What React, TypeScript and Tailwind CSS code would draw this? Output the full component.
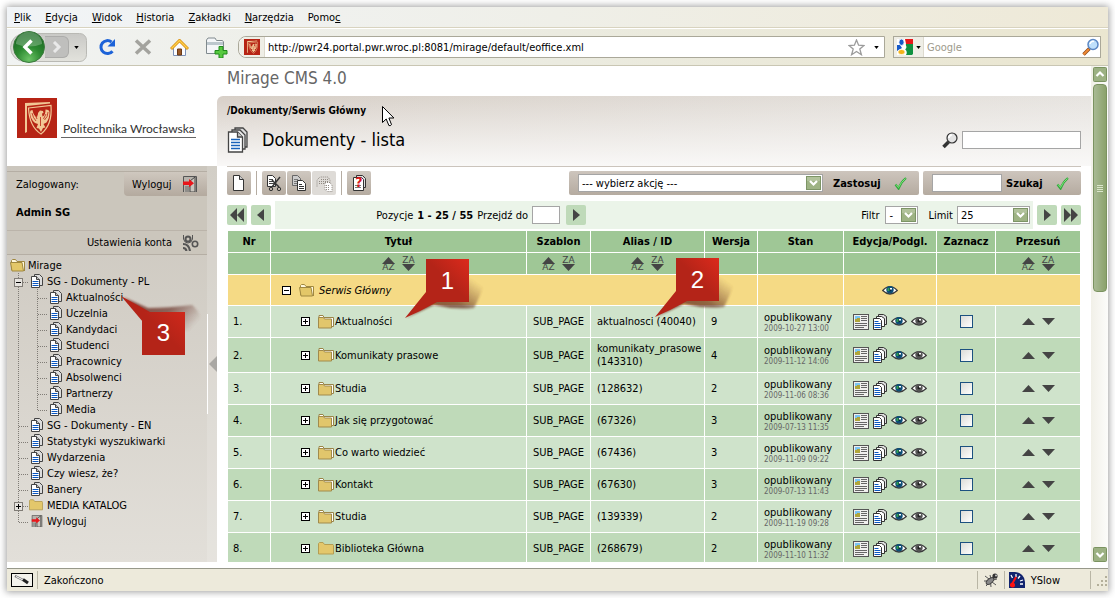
import React, { useState } from 'react';

type DocRow = { nr: number; title: string; alias: string; version: number; date: string; plain?: boolean };

const ROWS: DocRow[] = [
  { nr: 1, title: 'Aktualności', alias: 'aktualnosci (40040)', version: 9, date: '2009-10-27 13:00' },
  { nr: 2, title: 'Komunikaty prasowe', alias: 'komunikaty_prasowe (143310)', version: 4, date: '2009-11-12 14:06' },
  { nr: 3, title: 'Studia', alias: '(128632)', version: 2, date: '2009-11-06 08:36' },
  { nr: 4, title: 'Jak się przygotować', alias: '(67326)', version: 3, date: '2009-07-13 11:35' },
  { nr: 5, title: 'Co warto wiedzieć', alias: '(67436)', version: 3, date: '2009-11-09 09:22' },
  { nr: 6, title: 'Kontakt', alias: '(67630)', version: 3, date: '2009-07-13 11:43' },
  { nr: 7, title: 'Studia', alias: '(139339)', version: 2, date: '2009-11-19 09:28' },
  { nr: 8, title: 'Biblioteka Główna', alias: '(268679)', version: 2, date: '2009-11-10 11:32', plain: true },
];

type GuideKind = 'tee' | 'end' | 'line' | 'plus' | 'minus';
type TreeItem = { label: string; guides: GuideKind[]; icon: 'doc' | 'open' | 'folder' | 'exit' };

const TREE: TreeItem[] = [
  { label: 'Mirage', guides: [], icon: 'open' },
  { label: 'SG - Dokumenty - PL', guides: ['minus'], icon: 'doc' },
  { label: 'Aktualności', guides: ['line', 'tee'], icon: 'doc' },
  { label: 'Uczelnia', guides: ['line', 'tee'], icon: 'doc' },
  { label: 'Kandydaci', guides: ['line', 'tee'], icon: 'doc' },
  { label: 'Studenci', guides: ['line', 'tee'], icon: 'doc' },
  { label: 'Pracownicy', guides: ['line', 'tee'], icon: 'doc' },
  { label: 'Absolwenci', guides: ['line', 'tee'], icon: 'doc' },
  { label: 'Partnerzy', guides: ['line', 'tee'], icon: 'doc' },
  { label: 'Media', guides: ['line', 'end'], icon: 'doc' },
  { label: 'SG - Dokumenty - EN', guides: ['tee'], icon: 'doc' },
  { label: 'Statystyki wyszukiwarki', guides: ['tee'], icon: 'doc' },
  { label: 'Wydarzenia', guides: ['tee'], icon: 'doc' },
  { label: 'Czy wiesz, że?', guides: ['tee'], icon: 'doc' },
  { label: 'Banery', guides: ['tee'], icon: 'doc' },
  { label: 'MEDIA KATALOG', guides: ['plus'], icon: 'folder' },
  { label: 'Wyloguj', guides: ['end'], icon: 'exit' },
];

const App: React.FC = () => {
  const [checked, setChecked] = useState<number[]>([]);

  const toggle = (nr: number) =>
    setChecked(prev => (prev.includes(nr) ? prev.filter(n => n !== nr) : [...prev, nr]));

  return (
    <div className="relative h-screen overflow-hidden bg-white p-[7px] font-['DejaVu_Sans_Condensed','DejaVu_Sans',sans-serif] text-[11px] leading-[13px] text-black">
      <div className="flex h-full flex-col bg-white shadow-[0_0_7px_1px_rgba(0,0,0,0.38)]">
        <MenuBar />
        <BrowserToolbar />

        <div className="mb-[6px] flex min-h-0 flex-1">
          <Sidebar />
          <main className="flex min-w-0 flex-1 flex-col overflow-hidden">
            <div className="h-[30px] shrink-0 pl-[10px] text-[17px] leading-[24px] text-[#666]">Mirage CMS 4.0</div>
            <PageHeader />
            <div className="mr-[10px] ml-[10px] flex min-h-0 flex-1 flex-col overflow-hidden border-t border-[#cbc4bc]">
              <ActionBar />
              <Pager />
              <div className="shrink-0 pl-px">
                <table className="w-full table-fixed border-separate border-spacing-0">
                  <colgroup>
                    <col className="w-[43px]" />
                    <col />
                    <col className="w-[64px]" />
                    <col className="w-[114px]" />
                    <col className="w-[53px]" />
                    <col className="w-[86px]" />
                    <col className="w-[93px]" />
                    <col className="w-[59px]" />
                    <col className="w-[85px]" />
                  </colgroup>
                  <thead className="bg-[#9fc796]">
                    <tr className="h-[22px]">
                      {['Nr', 'Tytuł', 'Szablon', 'Alias / ID', 'Wersja', 'Stan', 'Edycja/Podgl.', 'Zaznacz', 'Przesuń'].map(h => (
                        <th key={h} scope="col" className="border-r border-b border-white p-0 text-center font-bold whitespace-nowrap">{h}</th>
                      ))}
                    </tr>
                    <tr className="h-[22px]">
                      {[false, true, true, true, false, false, false, false, true].map((sortable, i) => (
                        <td key={i} className="border-r border-b border-white p-0">
                          {sortable && <SortButtons />}
                        </td>
                      ))}
                    </tr>
                  </thead>
                  <tbody>
                    <tr className="h-[31px] bg-[#f5da85]">
                      <td className="border-r border-b border-white" />
                      <td colSpan={4} className="border-r border-b border-white p-0 pl-[11px]">
                        <div className="flex items-center">
                          <ExpandBox open />
                          <span className="ml-2"><FolderOpen /></span>
                          <a href="#serwis" className="ml-1 italic">Serwis Główny</a>
                        </div>
                      </td>
                      <td className="border-r border-b border-white" />
                      <td className="border-r border-b border-white p-0">
                        <button aria-label="Podgląd" className="mx-auto block"><Eye color /></button>
                      </td>
                      <td colSpan={2} className="border-r border-b border-white" />
                    </tr>
                    {ROWS.map(row => (
                      <tr key={row.nr} className={`h-8 ${row.nr % 2 ? 'bg-[#cfe3cb]' : 'bg-[#bfdab9]'}`}>
                        <td className="border-r border-b border-white p-0 pl-[5px]">{row.nr}.</td>
                        <td className="border-r border-b border-white p-0 pl-[30px]">
                          <div className="flex items-center">
                            <ExpandBox />
                            <span className="ml-2">{row.plain ? <Folder /> : <FolderPages />}</span>
                            <a href={`#doc-${row.nr}`} className="ml-px whitespace-nowrap">{row.title}</a>
                          </div>
                        </td>
                        <td className="border-r border-b border-white p-0 pl-[6px]">SUB_PAGE</td>
                        <td className="border-r border-b border-white py-1 pr-0 pl-[6px]">{row.alias}</td>
                        <td className="border-r border-b border-white p-0 pl-[6px]">{row.version}</td>
                        <td className="border-r border-b border-white p-0 pl-[6px]">
                          <div>opublikowany</div>
                          <div className="text-[8px] leading-[9px] text-[#666]">{row.date}</div>
                        </td>
                        <td className="border-r border-b border-white p-0">
                          <div className="flex items-center justify-center gap-1">
                            <button aria-label="Edytuj"><ArticleIcon /></button>
                            <button aria-label="Wersje"><PagesIcon /></button>
                            <button aria-label="Podgląd"><Eye color /></button>
                            <button aria-label="Podgląd roboczy"><Eye /></button>
                          </div>
                        </td>
                        <td className="border-r border-b border-white p-0">
                          <input
                            type="checkbox"
                            aria-label={`Zaznacz ${row.title}`}
                            checked={checked.includes(row.nr)}
                            onChange={() => toggle(row.nr)}
                            className="mx-auto block size-[13px] appearance-none border border-[#1c5180] bg-linear-to-br from-[#dcdcd7] to-white checked:bg-[#1c5180]"
                          />
                        </td>
                        <td className="border-r border-b border-white p-0">
                          <div className="flex items-center justify-center gap-[7px]">
                            <button aria-label="W górę"><Triangle up /></button>
                            <button aria-label="W dół"><Triangle /></button>
                          </div>
                        </td>
                      </tr>
                    ))}
                  </tbody>
                </table>
              </div>
            </div>
          </main>
          <ScrollBar />
        </div>

        <StatusBar />
      </div>

      {/* Numbered callouts lying over the page */}
      <Callout n={1} className="top-[259px] left-[405px]" />
      <Callout n={2} className="top-[258px] left-[655px]" />
      <CalloutUp n={3} className="top-[296px] left-[121px]" />
      <svg className="pointer-events-none absolute top-[106px] left-[382px]" width="13" height="21" viewBox="0 0 13 21">
        <path d="M.5.5v16l3.700-3.500 2.700 6.500q1.200.8 2.600-.9L6.900 12h5z" fill="#fff" stroke="#000" />
      </svg>
    </div>
  );
};

const MenuBar = () => (
  <nav className="flex h-[21px] shrink-0 items-center gap-[14px] border-b border-[#d8d3bf] bg-linear-to-r from-[#f1f4f7] via-[#efefe8] to-[#eee9d7] pl-[7px]">
    {[['', 'P', 'lik'], ['', 'E', 'dycja'], ['', 'W', 'idok'], ['', 'H', 'istoria'], ['', 'Z', 'akładki'], ['', 'N', 'arzędzia'], ['Pomo', 'c', '']].map(([a, key, b]) => (
      <button key={key}>{a}<u className="underline-offset-1">{key}</u>{b}</button>
    ))}
  </nav>
);

const BrowserToolbar = () => (
  <div className="flex h-[38px] shrink-0 items-center border-t border-b border-t-white border-b-[#c9c6b3] bg-linear-to-r from-[#f1f3f2] via-[#ebebe0] to-[#eae6d0] pr-[7px] pl-[3px]">
    <div className="flex h-[29px] w-[77px] shrink-0 items-center rounded-l-2xl rounded-r-lg border border-[#b9b9b4] bg-linear-to-b from-[#c9c9c6] to-[#e2e2dc] pl-[2px]">
      <button aria-label="Wstecz" className="shrink-0">
        <svg width="32" height="32" viewBox="0 0 32 32">
          <defs>
            <radialGradient id="back" cx=".5" cy=".9" r=".8">
              <stop offset="0" stopColor="#6cc366" /><stop offset=".5" stopColor="#2d8a31" /><stop offset="1" stopColor="#1a6a22" />
            </radialGradient>
          </defs>
          <circle cx="16" cy="16" r="15.500" fill="url(#back)" stroke="#3c7a3e" />
          <path d="M3 13a13 12 0 0 1 26 0q-13 5-26 0z" fill="#fff" opacity=".25" />
          <path d="M18.500 9.500L12 16l6.500 6.500" fill="none" stroke="#fff" strokeWidth="3.500" />
        </svg>
      </button>
      <button aria-label="Dalej" className="flex h-[22px] w-6 items-center justify-center rounded-r-md border border-l-0 border-[#acacaa] bg-[#bfbfbd]">
        <svg width="10" height="12" viewBox="0 0 10 12"><path d="M2 1l5 5-5 5" fill="none" stroke="#e9e9e9" strokeWidth="3" /></svg>
      </button>
      <button aria-label="Historia kart" className="ml-[5px]"><Caret /></button>
    </div>
    <button aria-label="Odśwież" className="ml-[11px]">
      <svg width="20" height="18" viewBox="0 0 20 18">
        <path d="M14.500 13.200A6.500 6.500 0 1 1 13.500 4" fill="none" stroke="#1d63d8" strokeWidth="3" />
        <path d="M17 1v7.500H9.500z" fill="#1d63d8" />
      </svg>
    </button>
    <button aria-label="Zatrzymaj" className="ml-4">
      <svg width="18" height="18" viewBox="0 0 18 18"><path d="M2 2.500l14 13M16 2.500l-14 13" stroke="#a3a39e" strokeWidth="3.500" /></svg>
    </button>
    <button aria-label="Strona startowa" className="ml-[18px]">
      <svg width="19" height="17" viewBox="0 0 19 17">
        <path d="M3.500 8v8.500h12V8l-6-5.500z" fill="#fbfcff" stroke="#7c92b9" />
        <path d="M1 10l8.500-8.500L18 10" fill="none" stroke="#d99114" strokeWidth="3" />
        <path d="M1.500 9.500l8-8 8 8" fill="none" stroke="#ffcf4a" strokeWidth="1.400" />
        <path d="M7.500 10h4v6h-4z" fill="#9a5a28" stroke="#6b3b17" />
      </svg>
    </button>
    <button aria-label="Nowa karta" className="ml-4">
      <svg width="23" height="21" viewBox="0 0 23 21">
        <path d="M1.500 16.500V3l1.500-2h7l1.500 2.500h6l1 1.500v11.500z" fill="#f4f6f8" stroke="#808a8e" />
        <path d="M2 5h16v3H2z" fill="#bcc7cd" />
        <path d="M14 9.500h4v4h4v3.500h-4v4h-4v-4h-4v-3.500h4z" fill="#57c93f" stroke="#1f8a1b" />
      </svg>
    </button>

    <div className="ml-[10px] flex h-[22px] min-w-0 flex-1 items-center rounded-l-lg border border-[#aaa899] bg-white">
      <span className="flex h-full w-[26px] shrink-0 items-center justify-center rounded-l-lg border-r border-[#dddace] bg-[#efeee6]"><Crest size={16} /></span>
      <input aria-label="Adres" defaultValue="http://pwr24.portal.pwr.wroc.pl:8081/mirage/default/eoffice.xml" className="min-w-0 flex-1 bg-transparent pl-[3px] outline-none" />
      <button aria-label="Dodaj zakładkę">
        <svg width="17" height="17" viewBox="0 0 17 17"><path d="M8.500 1l2.100 5.200 5.400.3-4.200 3.500 1.600 5.700-4.900-3.200-4.900 3.200 1.600-5.700L1 6.500l5.400-.3z" fill="#fff" stroke="#9b9b9b" strokeWidth="1.300" /></svg>
      </button>
      <button aria-label="Pokaż historię" className="mr-[5px] ml-[9px]"><Caret /></button>
    </div>

    <div className="ml-2 flex h-[22px] w-[208px] shrink-0 items-center border border-[#aaa899] bg-white">
      <button aria-label="Wyszukiwarka" className="flex h-full items-center gap-[3px] border-r border-[#dddace] bg-[#efeee6] pr-[2px] pl-[3px]">
        <svg width="16" height="16" viewBox="0 0 16 16">
          <rect width="16" height="16" fill="#fff" />
          <path d="M8 0h8v5H9z" fill="#e8181a" />
          <path d="M9 5h7v10l-1 1H9q2-3-1-6z" fill="#0f9140" />
          <path d="M0 6h3l2 3-5 3z" fill="#1559c8" />
          <ellipse cx="4.500" cy="3.200" rx="2.600" ry="3.200" fill="#1559c8" stroke="#fff" strokeWidth=".8" />
          <ellipse cx="4.500" cy="13" rx="3.600" ry="2.600" fill="#f4b31a" stroke="#fff" strokeWidth=".8" />
          <path d="M7 6q3 2 0 4" fill="none" stroke="#fff" strokeWidth="2" />
        </svg>
        <Caret />
      </button>
      <input aria-label="Szukaj w sieci" placeholder="Google" className="min-w-0 flex-1 pl-[3px] outline-none placeholder:text-[#9d9a8c]" />
      <button aria-label="Szukaj">
        <svg width="18" height="18" viewBox="0 0 18 18">
          <path d="M7.500 10.500L1.500 16.500" stroke="#8a4a1d" strokeWidth="3.400" />
          <path d="M7 11L1.500 16.500" stroke="#f08a34" strokeWidth="2" />
          <circle cx="11" cy="6.500" r="5" fill="#bfe0fb" stroke="#5b87c4" strokeWidth="1.500" />
          <path d="M8 6a3 3 0 0 1 4-2.500" stroke="#fff" strokeWidth="1.500" fill="none" />
        </svg>
      </button>
    </div>
  </div>
);

const Sidebar = () => (
  <aside className="flex w-[210px] shrink-0 flex-col">
    <div className="flex h-[100px] shrink-0 items-end pb-7 pl-[10px]">
      <Crest size={40} />
      <span className="ml-1 border-b border-[#666] pr-px pl-[2px] font-['Lato',sans-serif] text-[12px] leading-[16px] whitespace-nowrap text-[#333]">Politechnika Wrocławska</span>
    </div>
    <div className="flex min-h-0 flex-1 bg-linear-to-b from-[#cbc6bd] to-[#e2dfd9]">
      <div className="min-w-0 flex-1 pt-[5px]">
        <section className="border-y border-[#b5aea4] bg-[#cbc6bc]">
          <div className="flex items-center justify-between pl-[9px]">
            <span>Zalogowany:</span>
            <button className="flex h-6 w-[83px] items-center justify-between rounded-bl-sm bg-linear-to-b from-[#cfc8bf] to-[#b4aa9f] pr-[9px] pl-2">
              Wyloguj <ExitIcon size={16} />
            </button>
          </div>
          <div className="h-[34px] pt-[10px] pl-[9px] font-bold">Admin SG</div>
          <button className="flex h-6 w-full items-center justify-end gap-[10px] border-t border-[#bbb4aa] pr-2">
            Ustawienia konta
            <svg width="17" height="16" viewBox="0 0 17 16" fill="none" stroke="#555">
              <circle cx="6" cy="4" r="2.500" strokeWidth="2" />
              <path d="M1.500 0v4q1 4 4.500 4t4.500-4V0" />
              <circle cx="13" cy="9" r="2.700" strokeWidth="1.600" />
              <path d="M1 9q6 0 7 7M1 13q3 0 3.500 3" strokeWidth="2.200" />
            </svg>
          </button>
        </section>
        <ul className="pt-[2px]">
          {TREE.map(item => (
            <li key={item.label + item.guides.length} className={`flex h-4 items-center ${item.guides.length ? 'pl-[5px]' : 'pl-[3px]'}`}>
              {item.guides.map((g, i) => <Guide key={i} kind={g} />)}
              {item.icon === 'doc' && <DocIcon />}
              {item.icon === 'open' && <FolderOpen />}
              {item.icon === 'folder' && <span className="-ml-0.5"><Folder small /></span>}
              {item.icon === 'exit' && <ExitIcon size={12} />}
              <a href={`#${item.label}`} className={`whitespace-nowrap ${item.guides.length ? 'ml-1' : 'ml-0.5'}`}>{item.label}</a>
            </li>
          ))}
        </ul>
      </div>
      <div className="w-[10px] bg-white/15 pt-[148px]">
        <button aria-label="Zwiń panel" className="flex h-[100px] w-full items-center justify-end border-l border-white">
          <svg width="8" height="16" viewBox="0 0 8 16"><path d="M8 0v16L0 8z" fill="#aaa8a4" /></svg>
        </button>
      </div>
    </div>
  </aside>
);

const PageHeader = () => (
  <header className="h-[70px] shrink-0 rounded-tl-md bg-[linear-gradient(to_bottom,rgba(250,249,248,0),#f9f8f7),linear-gradient(to_right,#d7cfc7,#e7e4e0)] pt-2 pr-[10px] pl-[10px]">
    <div className="text-[10px] font-bold">/Dokumenty/Serwis Główny</div>
    <div className="mt-[10px] flex items-center">
      <svg width="22" height="26" viewBox="0 0 22 26" strokeWidth="1.300" stroke="#444">
        <path d="M8 1h8l4 4v15H8z" fill="#ddd" />
        <path d="M5 3h8l5 5v14H5z" fill="#eee" />
        <path d="M1.500 5h9l5 5v15h-14z" fill="#fff" />
        <path d="M10.500 5v5h5" fill="#ccc" />
        <path d="M4 12.500h9M4 15.500h9M4 18.500h9M4 21.500h9" stroke="#1a63ba" strokeWidth="1.500" />
      </svg>
      <h1 className="ml-[13px] text-[18px] leading-[22px]">Dokumenty - lista</h1>
      <label className="ml-auto flex items-center gap-1">
        <svg width="16" height="17" viewBox="0 0 16 17">
          <path d="M6.500 10L1.500 15" stroke="#333" strokeWidth="3.600" />
          <circle cx="10" cy="6" r="5" fill="#e3e3e3" stroke="#333" strokeWidth="1.200" />
          <path d="M6.800 6a3.200 3.200 0 0 1 3-3" stroke="#fff" strokeWidth="1.800" fill="none" />
        </svg>
        <input aria-label="Szukaj dokumentu" className="h-[18px] w-[119px] border border-[#a5a5a5] bg-white px-1 outline-none" />
      </label>
    </div>
  </header>
);

const ActionBar = () => (
  <div className="flex h-[34px] shrink-0 items-center pb-0.5">
    <ToolButton label="Nowy">
      <path d="M2.500.5h6l4 4v11h-10z" fill="#fff" stroke="#333" /><path d="M8.500.5v4h4" fill="#ccc" stroke="#333" />
    </ToolButton>
    <span className="mx-[5px] h-6 w-px bg-[#b5aca2]" />
    <div className="flex gap-px">
      <ToolButton label="Wytnij">
        <path d="M1.500.5h5l3 3v8h-8z" fill="#fff" stroke="#333" />
        <path d="M3 4.500h4M3 6.500h5M3 8.500h5" stroke="#444" />
        <path d="M14 2L6 12M6 5l7 7" stroke="#333" strokeWidth="1.500" />
        <circle cx="5" cy="14" r="1.700" fill="none" stroke="#333" /><circle cx="13" cy="14" r="1.700" fill="none" stroke="#333" />
      </ToolButton>
      <ToolButton label="Kopiuj">
        <path d="M1.500.5h5l3 3v7h-8z" fill="#ccc" stroke="#666" /><path d="M3 4.500h4M3 6.500h5M3 8.500h5" stroke="#777" />
        <path d="M6.500 5.500h5l3 3v7h-8z" fill="#fff" stroke="#333" /><path d="M8 9.500h3M8 11.500h5M8 13.500h5" stroke="#333" />
      </ToolButton>
      <button aria-label="Wklej" disabled className="flex size-6 items-center justify-center rounded-xs bg-[#dedbd7]">
        <svg width="17" height="17" viewBox="0 0 17 17" fill="none" stroke="#8f8982" strokeDasharray="1 1">
          <path d="M1 11.500V5l3-3h8l2 3v4M3 6.500h9M3 8.500h5M5 4.500h7" />
          <path d="M9 7.500h5l2 3v6h-5l-2-2z" fill="#fff" /><path d="M10 10.500h4M10 12.500h4M10 14.500h4" />
        </svg>
      </button>
    </div>
    <span className="mx-[5px] h-6 w-px bg-[#b5aca2]" />
    <button aria-label="Pomoc" className="relative flex size-6 items-center justify-center rounded-xs bg-linear-to-b from-[#cfc8c0] to-[#b5aba0]">
      <svg width="14" height="16" viewBox="0 0 14 16" stroke="#333">
        <path d="M4.500.5h6l3 3v9h-9z" fill="#ddd" /><path d="M1.500 2.500h8l2 2v11h-10z" fill="#fff" /><path d="M3 12.500h6M3 10.500h6" stroke="#777" />
      </svg>
      <span className="absolute inset-0 text-center text-[14px] leading-[22px] font-bold text-[#d8141a]">?</span>
    </button>

    <div className="ml-auto flex h-6 w-[350px] items-center rounded-xs bg-linear-to-b from-[#cdc5bd] to-[#b5aba0] pl-[9px]">
      <Dropdown label="Akcja" className="w-[245px]" options={['--- wybierz akcję ---']} />
      <button className="ml-[10px] flex flex-1 items-center justify-between pr-3 font-bold">Zastosuj <Tick /></button>
    </div>
    <div className="ml-1 flex h-6 w-[158px] items-center rounded-xs bg-linear-to-b from-[#cdc5bd] to-[#b5aba0] pl-[9px]">
      <input aria-label="Szukana fraza" className="h-[18px] w-[70px] border border-[#a5a5a5] bg-white px-1 outline-none" />
      <button className="ml-1 flex flex-1 items-center justify-between pr-3 font-bold">Szukaj <Tick /></button>
    </div>
  </div>
);

const Pager = () => (
  <div className="mb-0.5 flex h-7 shrink-0 items-center gap-1">
    <PagerButton label="Pierwsza strona"><path d="M8 0v14L1 7zM15 0v14L8 7z" /></PagerButton>
    <PagerButton label="Poprzednia strona"><path d="M11 1v12L4 7z" /></PagerButton>
    <div className="flex h-full flex-1 items-center bg-[#ebf4e9]">
      <form className="flex flex-[414] items-center justify-center" onSubmit={e => e.preventDefault()}>
        <span>Pozycje</span>
        <b className="mx-1 font-bold">1 - 25 / 55</b>
        <label htmlFor="goto">Przejdź do</label>
        <input id="goto" className="ml-1 h-[18px] w-7 border border-[#a5a5a5] bg-white px-1 outline-none" />
        <span className="ml-[6px]"><PagerButton label="Przejdź"><path d="M5 1v12l7-6z" /></PagerButton></span>
      </form>
      <div className="flex flex-[344] items-center justify-end pr-[3px]">
        <span className="mr-[6px]">Filtr</span>
        <Dropdown label="Filtr" className="w-[33px]" options={['-']} />
        <span className="mr-1 ml-[10px]">Limit</span>
        <Dropdown label="Limit" className="w-[73px]" options={['25', '50', '100']} />
      </div>
    </div>
    <PagerButton label="Następna strona"><path d="M5 1v12l7-6z" /></PagerButton>
    <PagerButton label="Ostatnia strona"><path d="M1 0v14l7-7zM8 0v14l7-7z" /></PagerButton>
  </div>
);

const PagerButton = ({ label, children }: { label: string; children: React.ReactNode }) => (
  <button type="button" aria-label={label} className="flex size-5 items-center justify-center rounded-xs bg-[#bfdab9]">
    <svg width="16" height="14" viewBox="0 0 16 14" fill="#444">{children}</svg>
  </button>
);

const ToolButton = ({ label, children }: { label: string; children: React.ReactNode }) => (
  <button aria-label={label} className="flex size-6 items-center justify-center rounded-xs bg-linear-to-b from-[#cfc8c0] to-[#b5aba0]">
    <svg width="16" height="16" viewBox="0 0 16 16">{children}</svg>
  </button>
);

const Dropdown = ({ label, className, options }: { label: string; className: string; options: string[] }) => (
  <span className={`relative block ${className}`}>
    <select aria-label={label} className="block h-[18px] w-full appearance-none border border-[#a5a5a5] bg-white pl-[3px] outline-none">
      {options.map(o => <option key={o}>{o}</option>)}
    </select>
    <svg className="pointer-events-none absolute top-0.5 right-0.5" width="15" height="14" viewBox="0 0 15 14">
      <rect x=".5" y=".5" width="14" height="13" fill="#9eb384" stroke="#7d9566" />
      <path d="M1 1h13v4H1z" fill="#b9c9a5" opacity=".7" />
      <path d="M4 5l3.500 3.500L11 5" fill="none" stroke="#fff" strokeWidth="2.200" />
    </svg>
  </span>
);

const SortButtons = () => (
  <div className="flex justify-center gap-[6px] font-['DejaVu_Sans',sans-serif] text-[9px] leading-[7px] text-[#444]">
    <button aria-label="Sortuj rosnąco" className="flex w-[14px] flex-col items-center">
      <Triangle up />
      <span>AZ</span>
    </button>
    <button aria-label="Sortuj malejąco" className="flex w-[14px] flex-col items-center">
      <span>ZA</span>
      <Triangle />
    </button>
  </div>
);

const ScrollBar = () => (
  <div className="flex w-[17px] shrink-0 flex-col items-center bg-linear-to-r from-[#f1f0e8] to-[#fcfcfa] pt-px">
    <button aria-label="Przewiń w górę"><ScrollArrow up /></button>
    <div className="mt-0.5 flex h-[208px] w-[14px] flex-col items-center justify-center gap-px rounded-sm border border-[#7b9360] bg-linear-to-r from-[#a9ba94] to-[#8ba26c]">
      {[0, 1, 2, 3].map(i => <span key={i} className="h-px w-[6px] bg-[#dbe6cb]" />)}
    </div>
    <button aria-label="Przewiń w dół" className="mt-auto"><ScrollArrow /></button>
  </div>
);

const ScrollArrow = ({ up }: { up?: boolean }) => (
  <svg className="block" width="14" height="15" viewBox="0 0 14 15">
    <rect x=".5" y=".5" width="13" height="14" rx="1" fill="#9cb183" stroke="#7b9360" />
    <path d={up ? 'M3.500 9L7 5.500 10.500 9' : 'M3.500 6L7 9.500 10.500 6'} fill="none" stroke="#fff" strokeWidth="2.200" />
  </svg>
);

const StatusBar = () => (
  <footer className="flex h-[23px] shrink-0 items-center border-t border-[#97988a] bg-[#edeadb] pl-1">
    <button aria-label="Stylish" className="flex h-[14px] w-[22px] items-center justify-center border border-black bg-[#f4f3ec]">
      <svg width="18" height="10" viewBox="0 0 18 10">
        <path d="M2 1l9 4.500" stroke="#777" strokeWidth="2.400" /><path d="M3 1.500l7 3.500" stroke="#fff" />
        <path d="M10 4.500l5 3.500" stroke="#222" strokeWidth="3" />
      </svg>
    </button>
    <span className="ml-1 h-[18px] w-px bg-[#b9b6a5]" />
    <span className="ml-[6px]">Zakończono</span>
    <span className="ml-auto h-[18px] w-px bg-[#b9b6a5]" />
    <svg className="mx-[5px]" width="16" height="16" viewBox="0 0 16 16">
      <path d="M2 4l4 3M1 9h5M3 14l4-4M7 3l1 4M14 7l-4 1M13 13l-4-3M8 15l-.5-5" stroke="#555" />
      <ellipse cx="7" cy="9" rx="4.500" ry="2.300" transform="rotate(-40 7 9)" fill="#888" stroke="#444" />
      <circle cx="12" cy="4" r="2.600" fill="#333" /><circle cx="13" cy="3.500" r="1" fill="#ccc" />
    </svg>
    <span className="h-[18px] w-px bg-[#b9b6a5]" />
    <button className="flex items-center gap-[6px] pl-1">
      <svg width="16" height="16" viewBox="0 0 16 16">
        <path d="M0 0h6a10 10 0 0 1 10 10v6H0z" fill="#12246e" />
        <path d="M2 3l1.500 3M7 2v3M11 4L9 6.500M14 8l-3 1M14 12h-3" stroke="#fff" strokeWidth="1.300" />
        <path d="M2 14L7 5" stroke="#f11" strokeWidth="2" /><circle cx="3.500" cy="13" r="2.500" fill="#f11" />
      </svg>
      YSlow
    </button>
    <span className="ml-[30px] h-[18px] w-px bg-[#b9b6a5]" />
    <svg className="mt-1 ml-[6px]" width="11" height="12" viewBox="0 0 11 12" fill="#b3af9a">
      <path d="M8 0h2v2H8zM4 4h2v2H4zM8 4h2v2H8zM0 8h2v2H0zM4 8h2v2H4zM8 8h2v2H8z" />
    </svg>
  </footer>
);

const Callout = ({ n, className }: { n: number; className: string }) => (
  <div className={`pointer-events-none absolute ${className}`}>
    <svg width="90" height="60" viewBox="0 0 90 60">
      <defs>
        <linearGradient id={`red${n}`} x1="0" y1="1" x2="1" y2="0"><stop offset=".5" stopColor="#b42418" /><stop offset="1" stopColor="#dc2a1c" /></linearGradient>
        <linearGradient id={`sh${n}`} x1="0" y1="1" x2="1" y2=".3"><stop offset="0" stopColor="#74271c" stopOpacity=".95" /><stop offset=".6" stopColor="#6a3a25" stopOpacity=".8" /><stop offset="1" stopColor="#7a4a35" stopOpacity="0" /></linearGradient>
        <filter id={`blur${n}`}><feGaussianBlur stdDeviation="1.200" /></filter>
      </defs>
      <path d="M1 59L26 43l38-23 18-2q-8 22-13 31-20 2-40-3z" fill={`url(#sh${n})`} filter={`url(#blur${n})`} opacity=".9" />
      <path d="M0 59L21 33h14v10H32Q16 52 0 59z" fill="#b42418" />
      <rect x="21" width="43" height="43" fill={`url(#red${n})`} />
    </svg>
    <span className="absolute top-0 left-[21px] w-[43px] text-center font-['Liberation_Sans',sans-serif] text-[24px] leading-[43px] text-white">{n}</span>
  </div>
);

const CalloutUp = ({ n, className }: { n: number; className: string }) => (
  <div className={`pointer-events-none absolute ${className}`}>
    <svg width="96" height="60" viewBox="0 0 96 60">
      <defs>
        <linearGradient id="redUp" x1="0" y1="1" x2="1" y2="0"><stop offset=".5" stopColor="#b42418" /><stop offset="1" stopColor="#d0281b" /></linearGradient>
        <linearGradient id="shUp" x1="0" y1="0" x2="1" y2=".4"><stop offset="0" stopColor="#7a2a20" /><stop offset=".6" stopColor="#7d5147" /><stop offset="1" stopColor="#7d5147" stopOpacity="0" /></linearGradient>
        <filter id="blurUp"><feGaussianBlur stdDeviation="1.200" /></filter>
      </defs>
      <path d="M2 1l25 11q20 0 44-3 10 8 14 30L40 30z" fill="url(#shUp)" filter="url(#blurUp)" opacity=".85" />
      <path d="M0 0l29 16 5 10-12 0z" fill="#b42418" />
      <rect x="21" y="16" width="43" height="43" fill="url(#redUp)" />
    </svg>
    <span className="absolute top-[16px] left-[21px] w-[43px] text-center font-['Liberation_Sans',sans-serif] text-[24px] leading-[41px] text-white">{n}</span>
  </div>
);

const Guide = ({ kind }: { kind: GuideKind }) => {
  const box = kind === 'plus' || kind === 'minus';
  const vertical = kind === 'end' ? 'M6.500 0v9' : 'M6.500 0v16';
  return (
    <svg className="shrink-0" width="19" height="16" viewBox="0 0 19 16" fill="none" stroke="#807c76" shapeRendering="crispEdges">
      <path d={vertical} strokeDasharray="1 1" />
      {kind !== 'line' && <path d="M7 9.500h10" strokeDasharray="1 1" />}
      {box && <rect x="2.500" y="5.500" width="8" height="8" fill="#e6e3de" />}
      {box && <path d={kind === 'plus' ? 'M4 9.500h5M6.500 7v5' : 'M4 9.500h5'} stroke="#000" />}
    </svg>
  );
};

const ExpandBox = ({ open }: { open?: boolean }) => (
  <button aria-label={open ? 'Zwiń' : 'Rozwiń'}>
    <svg width="9" height="9" viewBox="0 0 9 9" shapeRendering="crispEdges">
      <path d="M.5.5h8v8h-8z" fill="#fff" stroke="#000" />
      <path d={open ? 'M2 4.500h5' : 'M2 4.500h5M4.500 2v5'} stroke="#000" />
    </svg>
  </button>
);

const DocIcon = () => (
  <svg className="shrink-0" width="12" height="14" viewBox="0 0 12 14" stroke="#444">
    <path d="M3.500.5h5l3 3v8h-8z" fill="#ddd" />
    <path d="M.5 2.500h5l3 3v8h-8z" fill="#fff" />
    <path d="M5.500 2.500v3h3" fill="#bbb" />
    <path d="M1.500 7.500h6M1.500 9.500h6M1.500 11.500h6" stroke="#0a57c0" />
  </svg>
);

const PagesIcon = () => (
  <svg className="block" width="14" height="16" viewBox="0 0 14 16" stroke="#333">
    <path d="M5.500.5h5l3 2v8h-8z" fill="#ddd" />
    <path d="M3.500 2.500h5l3 2v8h-8z" fill="#fff" />
    <path d="M.5 4.500h6l2 2v9h-8z" fill="#fff" />
    <path d="M1.500 7.500h4M1.500 9.500h6M1.500 11.500h6M1.500 13.500h6" stroke="#0a57c0" />
  </svg>
);

const ArticleIcon = () => (
  <svg className="block" width="16" height="16" viewBox="0 0 16 16" shapeRendering="crispEdges">
    <path d="M.5.5h15v15H.5z" fill="#f0f0ee" stroke="#555" />
    <path d="M2 2h5v3H2z" fill="#7ac4f2" />
    <path d="M2 5h2V4h3v4H2z" fill="#b0a53a" />
    <path d="M8 2.500h6M8 4.500h6M8 6.500h6M2 9.500h12M2 11.500h12M2 13.500h9" stroke="#666" />
  </svg>
);

const Eye = ({ color }: { color?: boolean }) => (
  <svg className="block" width="16" height="11" viewBox="0 0 16 11">
    <path d="M.7 5.500Q8-2.500 15.300 5.500 8 12.500.7 5.500z" fill="#fff" stroke="#3b3b3b" strokeWidth="1.200" />
    <circle cx="8" cy="4.800" r="3.700" fill={color ? '#0d4f78' : '#555'} />
    <circle cx="8" cy="4.800" r="1.500" fill={color ? '#04283f' : '#222'} />
    {color && <path d="M5.500 3h2v3h-2z" fill="#2f9d52" />}
    <path d="M8 3h2v1.500H8z" fill="#fff" />
  </svg>
);

const FolderOpen = () => (
  <svg className="block shrink-0" width="16" height="14" viewBox="0 0 16 14">
    <path d="M1.500 12V2.500l1-1h3l1.500 2h7.500V13" fill="#fff8dc" stroke="#a08840" />
    <path d="M.5 4.500h11.500l1.500 8.500H2z" fill="#e3c768" stroke="#a08840" />
  </svg>
);

const FolderPages = () => (
  <svg className="block" width="16" height="14" viewBox="0 0 16 14">
    <path d="M1 3V.5h4l1 2h9.500v9H14" fill="#fff" stroke="#9a8548" />
    <path d="M.5 13V2.500h5l1 1.500h7v9z" fill="#e1c66c" stroke="#a18b4c" />
  </svg>
);

const Folder = ({ small }: { small?: boolean }) => (
  <svg className="block" width={small ? 14 : 16} height={small ? 12 : 13} viewBox="0 0 16 13">
    <path d="M.5 12V1.500l1-1h3.500l1.500 2h8.500l.5 1v8.500z" fill="#e3c76b" stroke="#b59d52" />
  </svg>
);

const ExitIcon = ({ size }: { size: number }) => (
  <svg className="shrink-0" width={size} height={size} viewBox="0 0 16 16">
    <path d="M1.500 16V.5h13V16" fill="#b8b4ad" stroke="#555" />
    <path d="M8 5l5-4v15H8z" fill="#c9c5be" stroke="#444" />
    <path d="M4 10v6M6 10v6" stroke="#666" />
    <path d="M1 5.500h6V3l5 4.200-5 4V9H1z" fill="#e8161b" />
  </svg>
);

const Crest = ({ size }: { size: number }) => (
  <svg className="shrink-0" width={size} height={size} viewBox="0 0 40 40">
    <rect width="40" height="40" fill="#b62415" />
    <path d="M8 35V5l25-1v1.500L10 8v26z" fill="#f2c795" />
    <path d="M11.500 10L34 7.500Q35.500 27 24 36 12.500 29 11.500 10z" fill="none" stroke="#f2c795" strokeWidth="1.200" />
    <path d="M21 15l2-2.500 3 .5.5 2-1.500.5.500 3q3-1 3-7 4 0 4 3 0 6-3 10l-3 1.500 2 3.500-2.500.5L24 34l-2-3.500-2.500-.5 1.500-4-3-1q-5-4-5-11 0-2 2.500-2 1 6 4.500 7l1-3z" fill="#f2c795" />
    <path d="M15 15q1 5 4 8M17.500 15l2.500 6M31 14q0 5-3.500 8M29 16l-2.500 5M23.500 19v9" fill="none" stroke="#b62415" strokeWidth=".8" />
  </svg>
);

const Tick = () => (
  <svg width="13" height="13" viewBox="0 0 13 13">
    <path d="M1.500 7.500L4.500 11.500Q7 5 12 1" fill="none" stroke="#35a83f" strokeWidth="2.200" />
    <path d="M2 7.500l2.500 3Q7 5 11.500 1.500" fill="none" stroke="#7be578" />
  </svg>
);

const Triangle = ({ up }: { up?: boolean }) => (
  <svg className="block" width="13" height="7" viewBox="0 0 13 7"><path d={up ? 'M6.500 0L13 7H0z' : 'M0 0h13L6.500 7z'} fill="#444" /></svg>
);

const Caret = () => (
  <svg className="block" width="5" height="3" viewBox="0 0 6 4"><path d="M0 0h6L3 4z" fill="#000" /></svg>
);

export default App;
